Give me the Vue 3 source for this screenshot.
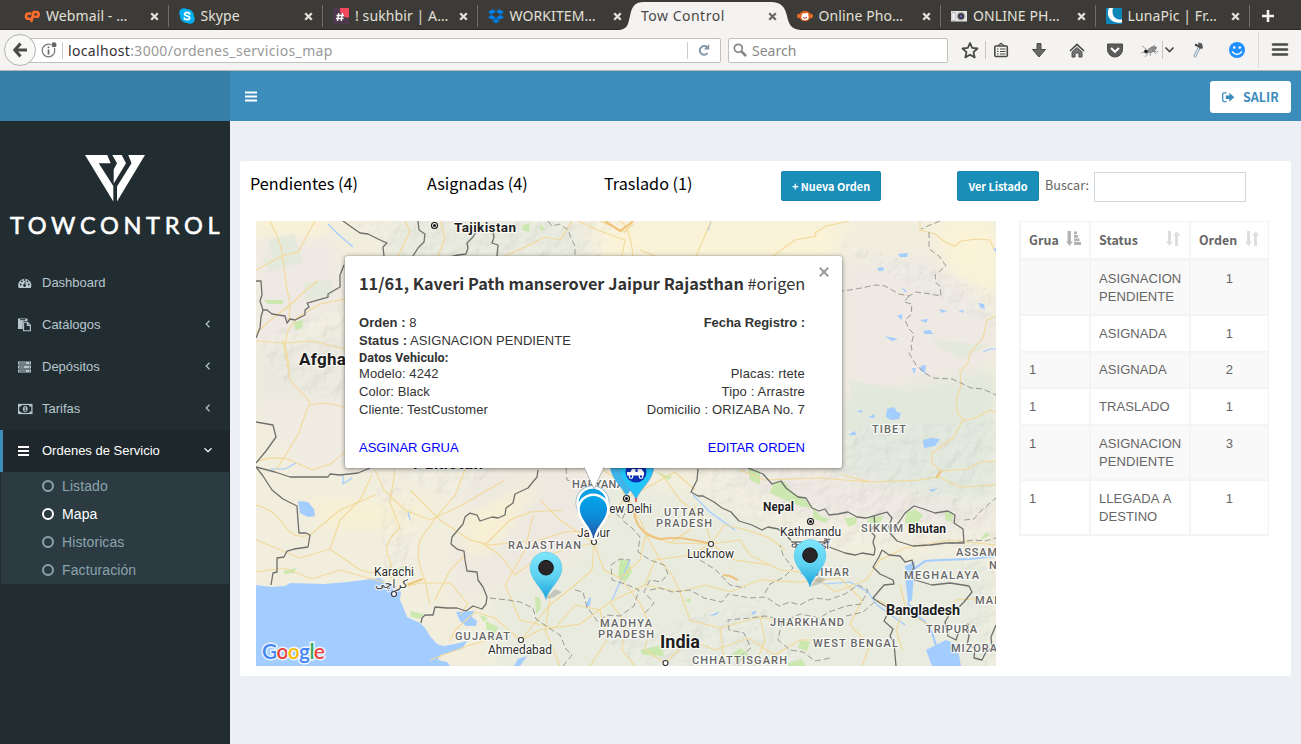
<script setup>
const tabs = [
  { id: 'cpanel', title: 'Webmail - …' },
  { id: 'skype', title: 'Skype' },
  { id: 'slack', title: '! sukhbir | A…' },
  { id: 'dropbox', title: 'WORKITEM…' },
  { id: 'tow', title: 'Tow Control', active: true },
  { id: 'monkey', title: 'Online Pho…' },
  { id: 'camera', title: 'ONLINE PH…' },
  { id: 'luna', title: 'LunaPic | Fr…' },
]
const menu = [
  { id: 'dash', label: 'Dashboard' },
  { id: 'paste', label: 'Catálogos', arrow: true },
  { id: 'server', label: 'Depósitos', arrow: true },
  { id: 'money', label: 'Tarifas', arrow: true },
  { id: 'bars', label: 'Ordenes de Servicio', active: true },
]
const submenu = ['Listado', 'Mapa', 'Historicas', 'Facturación']
const counters = ['Pendientes (4)', 'Asignadas (4)', 'Traslado (1)']
const rows = [
  { grua: '', status: 'ASIGNACION PENDIENTE', orden: 1, h: 53 },
  { grua: '', status: 'ASIGNADA', orden: 1, h: 35 },
  { grua: '1', status: 'ASIGNADA', orden: 2, h: 34, tight: true },
  { grua: '1', status: 'TRASLADO', orden: 1, h: 35 },
  { grua: '1', status: 'ASIGNACION PENDIENTE', orden: 3, h: 53 },
  { grua: '1', status: 'LLEGADA A DESTINO', orden: 1, h: 53 },
]

const borders = [
  '343,221 350,226 360,233 368,234 378,239 387,243 383,247 384,256',
  '418,221 419,230 425,234 424,242 418,248 413,256',
  '476,232 473,237 467,243 468,248 466,254 458,255 450,257',
  '493,232 494,237 492,243 498,245 497,256',
  '344,265 340,275 340,287 328,294 328,297 307,303 309,307 305,310 305,315 295,320 290,319 287,323 285,316 272,314 267,310 263,310 260,301 262,295 261,281 256,281',
  '263,310 261,317 260,328 256,338',
  '256,422 273,425 276,437 266,451 256,463',
  '256,467 275,472 290,477 328,477 330,474 340,475 358,473 370,468',
  '256,467 263,476 272,490 283,499 297,506 298,521 299,533 306,533 310,535 308,547 294,549 287,551 284,557 277,558 277,572 273,573 271,585',
  '538,470 537,477 532,483 528,488 515,494 513,503 506,508 505,515 498,518 492,517 480,521 477,515 470,513 465,517 463,524 452,537 451,544 457,549 464,551 465,560 467,571 477,572 478,580 483,587 487,597 486,604 482,609 473,606 466,611 457,608 447,608 435,607 433,615 425,615 422,618 421,623',
  '698,469 697,480 691,492 698,496 703,496 714,502 722,508 731,512 739,521 752,525 762,530 768,527 778,529 787,536 793,543 802,546 812,548 829,547 845,553 855,555 862,553 874,555 875,549 873,542 875,536 870,531 875,525 874,516',
  '748,468 763,474 772,484 781,481 786,488 798,497 806,498 812,508 819,511 825,509 829,515 838,514 848,512 857,517 866,518 880,514 887,512 892,518 889,526 890,533 897,541 913,546 930,545 946,543 964,543 963,529 954,523 955,515 948,511 935,513 924,509 914,506 905,513 899,522 893,528',
  '882,550 879,557 873,567 880,574 893,580 894,584 884,585 878,592 873,598 880,603 887,607 887,615 884,621 893,629 890,636 894,643 896,666',
  '882,550 889,555 900,556 905,562 912,560 914,568 910,573 915,580 932,585 950,583 969,586 972,592 964,602 959,607 952,610 945,622 948,636 956,640 960,628 968,624 969,636 967,645 975,648 974,658 982,660 986,652 992,648 991,637 996,625',
]
const dashed = [
  '548,221 552,226 560,224 568,230 571,238 575,246 575,256',
  '940,221 930,225 921,229', '929,232 929,249 939,256 946,266 935,275 936,283 940,286 941,296 930,294 916,292 909,296 899,294 892,290 885,286 876,285 861,288 850,290 842,291',
  '909,296 904,302 912,304 911,315 905,320 909,329 914,334 911,345 912,350 909,353 916,365 925,373 933,378 952,379 961,383 971,388 983,389 996,395',
  '964,520 974,519 981,511 990,503 996,498',
  '949,543 961,542 973,540 985,541 996,538',
  '625,470 629,485 626,498 628,506 622,520 632,528 640,537 638,552 650,560 664,565 668,574 661,582 650,580 644,592 654,603 645,613',
  '650,590 660,588 672,592 690,590 704,598 722,602 728,594 750,598 766,597 779,606 790,602 800,605 809,600 816,598 828,600 845,594 858,585 868,590 861,604 846,606 829,612 820,618 800,614 786,620 765,616 750,618 728,620 729,630 744,633 751,648 740,657 738,666',
  '765,593 770,584 784,577 793,568 783,555 780,545',
  '490,598 508,600 520,602 533,608 536,619 552,630 560,635 566,649 572,655 563,666',
  '575,590 583,592 587,607 598,622 607,615 620,616 634,606 639,590 628,585 612,580 611,565 620,559 630,560',
  '566,468 567,480 580,485 593,496 610,506 622,520',
  '846,616 863,612 877,600',
  '782,621 778,640 790,650 803,652 815,661 830,658',
  '700,560 716,570 730,585 745,588',
]
const roads = [
  'M256 333Q270 320 281 312T306 290L318 281', 'M270 221Q280 240 282 253T287 290Q292 305 288 323',
  'M256 270L282 256L298 252L315 221', 'M290 370L285 345L288 330L298 317L320 304L345 299',
  'M256 341L286 343L312 341L345 349', 'M256 462Q274 455 290 460L312 470L330 464Q342 455 348 448',
  'M283 340L290 380L310 402Q302 423 298 435L276 470', 'M310 405Q328 401 345 408',
  'M256 540L300 558L330 549L360 570L393 578', 'M256 572L284 568L312 579L340 570L393 585',
  'M395 470L390 503L400 528Q380 545 390 560L394 580', 'M465 470L455 495L438 515L420 540Q415 560 425 580L430 605',
  'M375 470L384 490L405 510L430 520L462 505L505 480', 'M410 490L440 520L470 540L490 545',
  'M256 505Q275 510 284 525T310 535L340 510L375 495', 'M393 590L420 583L450 583L468 604L460 615',
  'M480 542L500 555L515 575L535 560L563 550L594 543', 'M490 545L540 540L565 532L610 530',
  'M533 515L525 550L505 585L520 620L555 628L575 605', 'M594 543L592 570L575 585L550 605L521 640',
  'M594 543L605 520L626 498L618 480L603 470', 'M520 640L495 618L475 612L455 630L450 641',
  'M521 640L540 630L580 624L610 602L645 585L680 592', 'M626 498L640 520L646 533L670 543L711 544',
  'M626 498L650 486L675 472L695 490', 'M660 472L680 500L705 520L711 544',
  'M646 533L640 560L620 578L604 570L594 543', 'M645 585L655 560L690 555L711 544L735 560L770 565',
  'M711 544L740 540L750 555L780 570L810 573', 'M711 544L724 525L747 530L770 538L785 550',
  'M680 592L705 585L730 592L760 580L800 582L840 578', 'M680 592L690 620L720 628L760 617L800 626',
  'M620 578L640 603L650 625L645 650L665 663', 'M665 663L690 640L715 650L748 638L775 655L800 640L840 640',
  'M840 578L862 600L850 625L870 645L862 666', 'M810 573L835 592L866 580L880 560L905 548L950 540L996 545',
  'M576 220L600 231L625 240L622 256', 'M600 221L625 232L633 224', 'M640 250L655 256',
  'M711 221L696 256', 'M773 256L795 240L816 236L815 233L826 226L850 221',
  'M920 221L920 230L935 234L945 242L955 246L961 241L977 239L990 240L994 249',
  'M620 221Q630 226 633 256', 'M996 316L987 320L983 338L970 353L968 362L960 372L961 386L956 401L958 414L963 420L953 438L932 453L932 463L941 471L968 469L980 462L996 461',
  'M963 421L975 418L990 410L996 412', 'M842 475L870 482L900 481L920 480L939 477L960 487L996 485',
  'M740 470L765 480L820 478L870 482', 'M405 221L410 231L398 256',
  'M440 221L445 238L438 256', 'M505 256L525 247L545 237L560 240L572 221',
  'M540 575L550 599L545 630L560 666', 'M575 605L600 610L607 640L590 666',
  'M610 602L625 622L622 650L635 666', 'M720 628L725 666', 'M760 617L765 640L755 666',
  'M878 600L900 611L920 620L935 628', 'M900 585L905 605L896 630L902 650', 'M950 610L956 600L996 598',
  'M435 600L450 570L465 555', 'M330 549L340 520L360 500L372 475', 'M430 660L470 645L488 640',
  'M645 533L660 560L672 575L680 592', 'M670 543L690 530L695 505', 'M540 500L560 520L594 543', 'M485 545L510 520L530 512L562 510',
]
const majorRoads = [
  'M626 498Q634 506 635 517Q640 535 660 539Q675 537 687 539T708 543',
  'M605 221L620 231L630 224L633 221', 'M404 586L423 579', 'M723 575L730 576L738 580', 'M936 478L941 471',
]
const lakes = [
  '898,254 908,253 907,257 900,257', '878,268 884,267 883,271 878,271', '901,287 907,291 905,292',
  '978,303 984,304 985,309 981,308', '897,316 902,314 902,320', '920,320 928,319 926,323', '919,272 920,270',
  '923,331 930,330 933,334 925,334', '885,336 898,339 892,341', '939,309 947,311 942,313', '958,311 963,310 964,313',
  '921,366 926,365 925,372 929,376 920,370', '912,368 916,368 914,374', '887,409 894,407 897,412 901,413 899,419 891,420 886,417',
  '868,417 875,414 874,418', '923,440 932,438 940,439 935,446 924,448', '848,435 855,431 856,435', '993,249 996,248 996,252',
  '857,411 863,410 861,413', '930,424 931,432', '940,408 938,414', '915,395 919,398',
  '709,616 720,611 716,615', '751,612 757,611 754,615', '586,605 589,598 591,597 590,605 585,609', '929,490 938,488 932,492',
]
const greens = [
  '264,300 283,300 283,304 268,304', '294,322 303,320 302,328 295,330', '523,225 530,223 529,232 522,230',
  '541,223 545,231 540,230', '748,468 760,471 760,485 750,480', '773,483 784,481 793,494 803,497 812,508 800,506 785,500 770,493',
  '813,508 822,517 829,519 825,523 813,518', '845,518 857,517 856,524 848,527', '870,517 884,516 878,526 867,522',
  '906,513 915,509 923,515 916,525 905,523', '945,511 954,514 952,522 945,520', '622,470 632,466 650,473 640,478',
  '620,558 629,561 632,572 625,582 618,578', '283,571 296,568 294,573 284,574', '410,611 424,614 420,619 411,617',
  '479,615 488,618 484,622', '486,621 498,627 495,634 486,629', '640,650 662,645 664,656 643,655',
  '620,562 630,568 627,580 620,578', '684,600 691,598 690,603', '800,640 810,642 807,651 798,648', '535,596 540,598 541,608 536,614',
  '730,655 741,648 750,656 738,662', '398,568 404,566 403,572 398,574', '986,532 990,535 980,541', '655,472 672,477 668,480', '788,663 802,659 806,666 788,666',
]
const greys = [
  { t: 'TIBET', x: 872, y: 433, w: 34 }, { t: 'HARYANA', x: 572, y: 488, w: 52 },
  { t: 'UTTAR', x: 664, y: 516, w: 40 }, { t: 'PRADESH', x: 656, y: 527, w: 56 },
  { t: 'SIKKIM', x: 861, y: 532, w: 42 }, { t: 'BIHAR', x: 812, y: 576, w: 37 },
  { t: 'ASSAM', x: 956, y: 556, w: 41 }, { t: 'N', x: 989, y: 569, w: 8 },
  { t: 'MEGHALAYA', x: 904, y: 579, w: 75 }, { t: 'MAN', x: 975, y: 604, w: 27 },
  { t: 'TRIPURA', x: 926, y: 633, w: 51 }, { t: 'MIZORA', x: 951, y: 652, w: 46 },
  { t: 'JHARKHAND', x: 770, y: 626, w: 74 }, { t: 'WEST BENGAL', x: 813, y: 647, w: 85 },
  { t: 'CHHATTISGARH', x: 692, y: 664, w: 95 }, { t: 'MADHYA', x: 600, y: 627, w: 52 },
  { t: 'PRADESH', x: 598, y: 638, w: 56 }, { t: 'GUJARAT', x: 455, y: 640, w: 55 },
  { t: 'RAJASTHAN', x: 508, y: 549, w: 73 },
]
const cities = [
  { t: 'New Delhi', x: 601, y: 513, w: 51 }, { t: 'Kathmandu', x: 780, y: 536, w: 61 },
  { t: 'Lucknow', x: 687, y: 558, w: 47 }, { t: 'Karachi', x: 374, y: 576, w: 40 },
  { t: 'Ahmedabad', x: 488, y: 654, w: 64 }, { t: 'Jaipur', x: 577, y: 537, w: 33 },
]
const countries = [
  { t: 'Tajikistan', x: 454, y: 232, w: 62, s: 13.5 }, { t: 'Afghanistan', x: 299, y: 365, w: 96, s: 17 },
  { t: 'Pakistan', x: 413, y: 469, w: 70, s: 17 }, { t: 'Nepal', x: 763, y: 511, w: 31, s: 12 },
  { t: 'Bhutan', x: 908, y: 533, w: 38, s: 12 }, { t: 'Bangladesh', x: 886, y: 615, w: 74, s: 14.5 },
  { t: 'India', x: 660, y: 648, w: 40, s: 18 },
]
const towns = [[711, 544], [394, 594], [521, 640], [594, 542], [665.5, 663]]
const capitals = [[434.5, 225.5], [626.5, 498.5], [810.5, 521.5]]
const dotPins = [[546, 567], [810, 554.5]]
</script>

<template>
  <div class="window">
    <div class="tabbar">
      <div v-for="tab in tabs" :key="tab.id" class="tab" :class="{ active: tab.active, before: tab.id === 'dropbox' }">
        <svg v-if="tab.active" class="tabshape" width="182" height="30" viewBox="0 0 182 30">
          <path d="M0 30C9 29 9 24 11 16C13 6 16 2 25 2H152C162 2 166 7 168 16C170 25 172 29 182 30Z" fill="#f4f3f2" />
        </svg>
        <svg v-else class="favicon" width="16" height="16" viewBox="0 0 16 16">
          <g v-if="tab.id === 'cpanel'" fill="none" stroke="#ff6c2c" stroke-width="2.6" stroke-linecap="round" stroke-linejoin="round">
            <path d="M6.5 5.6H4.6a2.6 2.6 0 0 0 0 5.2H6M7.500 13L9.700 4h2.600a2.300 2.300 0 0 1 0 4.800H11" />
          </g>
          <g v-else-if="tab.id === 'skype'">
            <circle cx="5" cy="5" r="4.800" fill="#00aff0" /><circle cx="11" cy="11" r="4.800" fill="#00aff0" /><circle cx="8" cy="8" r="7" fill="#00aff0" />
            <path d="M10.800 5.800C10 4 5.300 4 5.500 6.200C5.700 8.300 10.700 7.300 10.700 9.800C10.700 12.200 5.700 12 5.200 10" fill="none" stroke="#fff" stroke-width="1.800" stroke-linecap="round" />
          </g>
          <g v-else-if="tab.id === 'slack'">
            <rect width="16" height="16" fill="#4d394b" /><path d="M7 0h9v9.500a8 8 0 0 1-9-9.500z" fill="#f2495c" />
            <path d="M5.800 5L4.500 13M9.500 5L8.200 13M3.500 7.500h7.500M3 10.500h7.500" stroke="#fff" stroke-width="1.400" />
          </g>
          <g v-else-if="tab.id === 'dropbox'" fill="#007ee5">
            <path d="M4.700 1L8 3.700L3.300 6.500L0 4zM11.300 1L16 4L12.700 6.500L8 3.700zM0 9.200L3.300 6.700L8 9.500L4.700 12zM16 9.200L12.700 6.700L8 9.500L11.300 12zM8 10.500L11.400 13L8 15.500L4.600 13z" />
          </g>
          <g v-else-if="tab.id === 'monkey'">
            <circle cx="2.300" cy="8" r="2.300" fill="#e8722c" /><circle cx="13.700" cy="8" r="2.300" fill="#e8722c" /><ellipse cx="8" cy="8" rx="5.800" ry="5.200" fill="#e0601c" />
            <ellipse cx="8" cy="9" rx="3.700" ry="3.300" fill="#fff" /><circle cx="6.600" cy="6.700" r="1.600" fill="#fff" /><circle cx="9.700" cy="6.300" r="1.600" fill="#fff" /><path d="M6 9.500q2 2 4-.5" stroke="#a33" fill="none" />
          </g>
          <g v-else-if="tab.id === 'camera'">
            <rect y="3" width="16" height="10.500" fill="#e6e6e6" /><rect x="1" y="4.500" width="3" height="8" fill="#f8f8f8" stroke="#999" stroke-width=".6" /><circle cx="10" cy="8.300" r="4.300" fill="#aaa" /><circle cx="10" cy="8.300" r="3" fill="#333" /><circle cx="10" cy="8.300" r="1.300" fill="#66c" />
          </g>
          <g v-else>
            <rect width="16" height="16" fill="#0f86b8" /><path d="M3 0C-1 9 6 16 16 14.500V11.500C9 12.500 5 7 7 0z" fill="#fff" />
          </g>
        </svg>
        <span class="tabtitle">{{ tab.title }}</span>
        <svg class="tabclose" width="9" height="9" viewBox="0 0 9 9"><path d="M1.200 1.200L7.800 7.800M7.800 1.200L1.200 7.800" stroke="currentColor" stroke-width="2.300" /></svg>
      </div>
      <svg class="plus" width="14" height="14" viewBox="0 0 14 14"><path d="M7 1V13M1 7H13" stroke="#f2f1f0" stroke-width="2.600" /></svg>
    </div>

    <div class="navbar">
      <div class="back"><svg width="14" height="16" viewBox="0 0 14 16"><path d="M7.500 1.500L1.800 8L7.500 14.500M2 8H14" fill="none" stroke="#4a4a48" stroke-width="3.200" /></svg></div>
      <div class="urlbox">
        <svg class="info" width="18" height="18" viewBox="0 0 18 18"><circle cx="7.500" cy="9.500" r="6.300" fill="none" stroke="#777" stroke-width="1.200" /><path d="M7.500 8.500V13.500M7.500 5.500V7.200" stroke="#666" stroke-width="1.700" /><circle cx="13" cy="3.800" r="3.300" fill="#fff" /><circle cx="13" cy="3.800" r="2.500" fill="#666" /></svg>
        <span class="url"><b>localhost</b>:3000/ordenes_servicios_map</span>
        <span class="reload"><svg width="14" height="14" viewBox="0 0 14 14"><path d="M10.500 10A4.300 4.300 0 1 1 10 4.200" fill="none" stroke="#8497a8" stroke-width="2" /><path d="M12.200 1V6.500H6.800z" fill="#8497a8" /></svg></span>
      </div>
      <div class="searchbox">
        <svg width="14" height="14" viewBox="0 0 14 14"><circle cx="5.300" cy="5.300" r="4" fill="none" stroke="#888" stroke-width="1.700" /><path d="M8 8L13 13" stroke="#888" stroke-width="2.600" /></svg>
        <span>Search</span>
      </div>
      <svg class="tools" width="353" height="40" viewBox="948 30 353 40">
        <path d="M970 43l2.200 4.900 5.300.6-4 3.600 1.200 5.300-4.700-2.700-4.700 2.700 1.200-5.300-4-3.600 5.300-.6z" fill="none" stroke="#4a4a48" stroke-width="1.800" stroke-linejoin="round" />
        <path d="M985.500 41V59M1162.500 41V59" stroke="#c9c7c4" />
        <path d="M1258.500 32V68" stroke="#dddbd8" />
        <g fill="none" stroke="#4a4a48" stroke-width="1.600"><rect x="994.800" y="46" width="12.500" height="10.500" rx="1" /><path d="M998 46q.5-1.500 1.800-1.500q1.200-2.300 2.500 0q1.300 0 1.700 1.500M997 49h1.500M1000 49h5.500M997 51.500h1.500M1000 51.500h5.500M997 54h1.500M1000 54h5.500" stroke-width="1.200" /></g>
        <path d="M1037 43.500h4v6h4.500l-6.500 7.500-6.500-7.500h4.500z" fill="#686866" stroke="#4a4a48" />
        <path d="M1070 51l7-6.500 7 6.500" fill="none" stroke="#4a4a48" stroke-width="1.700" /><path d="M1077 47.500l5 4.500v5h-3v-4h-4v4h-3v-5z" fill="#777" stroke="#4a4a48" />
        <path d="M1107.500 44h15v5.500a7.500 7.500 0 0 1-15 0z" fill="#5b5b59" stroke="#4a4a48" /><path d="M1111 48l4 3.800 4-3.800" fill="none" stroke="#fff" stroke-width="2" />
        <g stroke="#666" fill="#999" stroke-width=".6"><ellipse cx="1152" cy="49.500" rx="4.500" ry="2.300" transform="rotate(-25 1152 49.500)" /><circle cx="1146" cy="51.500" r="1.800" fill="#111" /><path d="M1150 49l5-4M1152 49l5-2M1149 52l-4 5M1151 52l-1 4M1153 51l3 3M1146 49l-4-3M1144 52l-3 1M1152 51l6 1" /></g>
        <path d="M1165.500 47.500l4 4 4-4" fill="none" stroke="#4a4a48" stroke-width="1.700" />
        <path d="M1194.500 57l5-10" stroke="#8da0b3" stroke-width="3" /><path d="M1194.800 56.500l4.700-9.500" stroke="#eef3f7" stroke-width="1.100" /><path d="M1195 44.500l7.500 3.500" stroke="#444" stroke-width="2" /><path d="M1198 42.500l4 1 .8 3.500-3.300 2z" fill="#555" />
        <circle cx="1237" cy="50" r="8" fill="#1e90ff" /><circle cx="1234.200" cy="47.500" r="1.300" fill="#fff" /><circle cx="1239.800" cy="47.500" r="1.300" fill="#fff" /><path d="M1232 51.500q5 6 10 0" fill="none" stroke="#fff" stroke-width="1.300" />
        <path d="M1273 44.500h14M1273 49.500h14M1273 54.500h14" stroke="#4a4a48" stroke-width="2.600" stroke-linecap="round" />
      </svg>
    </div>

    <header class="topbar">
      <div class="brand"></div>
      <svg class="burger" width="12" height="11" viewBox="0 0 12 11"><path d="M0 1.500H12M0 5.500H12M0 9.500H12" stroke="#fff" stroke-width="2" /></svg>
      <div class="salir">
        <svg width="13" height="11" viewBox="0 0 13 11"><path d="M4.500 .8H2.300Q.7 .8 .7 2.400V8.100Q.7 9.700 2.300 9.700H4.500" fill="none" stroke="#3c8dbc" stroke-width="1.300" /><path d="M3.800 3.500H7.300V.8L12.300 5.300L7.300 9.700V7H3.800z" fill="#3c8dbc" /></svg>
        <span>SALIR</span>
      </div>
    </header>

    <div class="body">
      <aside class="sidebar">
        <svg class="logo" width="230" height="141" viewBox="0 121 230 141">
          <g fill="#fff">
            <path d="M85 155H107.300L110.700 163.300H98.700L113.300 186V201.500z" />
            <path d="M112.300 155H121.700L126 163.300L113.700 183.500V169.500L117 163.300z" />
            <path d="M128.300 155H145L117 201.500V186.500L131.500 163.300z" />
            <text x="10" y="233.700" class="wordmark" textLength="209.500">TOWCONTROL</text>
          </g>
        </svg>
        <div v-for="m in menu" :key="m.id" class="item" :class="{ active: m.active }">
          <svg class="mi" width="15" height="14" viewBox="0 0 15 14">
            <g v-if="m.id === 'dash'"><path d="M.5 11.500A6.600 6.600 0 1 1 13 11.500Q12.800 12 12.300 12H1.200Q.7 12 .5 11.500z" fill="currentColor" /><g fill="#222d32"><circle cx="2.700" cy="8.500" r=".9" /><circle cx="3.900" cy="5.300" r=".9" /><circle cx="6.700" cy="3.900" r=".9" /><circle cx="9.600" cy="5.300" r=".9" /><circle cx="10.800" cy="8.500" r=".9" /><path d="M7.800 5.800L7.300 8.300A1.400 1.400 0 1 1 6.300 8.100L7 5.600z" /></g></g>
            <g v-else-if="m.id === 'paste'"><path d="M0 .5H9.500V3H6Q4.800 3 4.800 4.200V11H0z" fill="currentColor" /><path d="M2.200 1.700H7.300" stroke="#222d32" /><path d="M5.600 4.300H9.500L12.400 7.200V12.700H5.600zM9.300 4.300V7.400H12.400" fill="none" stroke="currentColor" stroke-width="1.100" /></g>
            <g v-else-if="m.id === 'server'"><path d="M0 2H13V5H0zM0 6H13V9H0zM0 10H13V13H0z" fill="currentColor" transform="translate(0 -.5)" /><path d="M1 3H8M1 7H6M1 11H8M11 3H12M11 7H12M11 11H12" stroke="#222d32" stroke-width=".9" /></g>
            <g v-else-if="m.id === 'money'"><rect x=".6" y="2.500" width="13.300" height="9" fill="none" stroke="currentColor" stroke-width="1.200" /><path d="M1 2.500H4Q3.500 4.500 1 5zM13.500 2.500H10.500Q11 4.500 13.500 5zM1 11.500H4Q3.500 9.500 1 9zM13.500 11.500H10.500Q11 9.500 13.500 9z" fill="currentColor" /><ellipse cx="7.250" cy="7" rx="2.300" ry="3" fill="currentColor" /><path d="M6.300 6L7.400 5.300V8.500M6.200 8.600H8.500" fill="none" stroke="#222d32" stroke-width=".8" /></g>
            <path v-else d="M0 4H11M0 8H11M0 12H11" stroke="currentColor" stroke-width="2" transform="translate(0 -1)" />
          </svg>
          <span>{{ m.label }}</span>
          <svg v-if="m.arrow" class="arrow" width="8" height="8" viewBox="0 0 8 8"><path d="M5.500 .8L2.200 4L5.500 7.200" fill="none" stroke="currentColor" stroke-width="1.200" /></svg>
          <svg v-if="m.active" class="arrow" width="8" height="8" viewBox="0 0 8 8"><path d="M.5 2.300L4 5.600L7.500 2.300" fill="none" stroke="currentColor" stroke-width="1.200" /></svg>
        </div>
        <div class="submenu">
          <div v-for="s in submenu" :key="s" class="sub" :class="{ on: s === 'Mapa' }"><i></i><span>{{ s }}</span></div>
        </div>
      </aside>

      <main class="content">
        <section class="panel">
          <div class="toprow">
            <div v-for="c in counters" :key="c" class="counter">{{ c }}</div>
            <div class="cell"><span class="btn nueva">+ Nueva Orden</span></div>
            <div class="last"><span class="btn ver">Ver Listado</span><label>Buscar:</label><input type="text" /></div>
          </div>
          <div class="columns">
            <div class="map">
              <svg class="mapsvg" width="740" height="445" viewBox="256 221 740 445">
                <defs>
                  <filter id="relief" x="0" y="0" width="1" height="1">
                    <feTurbulence type="fractalNoise" baseFrequency=".07" numOctaves="4" seed="8" result="n" />
                    <feDiffuseLighting in="n" surfaceScale="4" lighting-color="#fff" result="l"><feDistantLight azimuth="225" elevation="55" /></feDiffuseLighting>
                    <feComposite in="l" in2="SourceGraphic" operator="in" />
                  </filter>
                  <filter id="soft" x="-20%" y="-20%" width="140%" height="140%"><feGaussianBlur stdDeviation="7" /></filter>
                  <linearGradient id="cy" x1="0" y1="0" x2="0" y2="1"><stop offset="0" stop-color="#7fe6fc" /><stop offset=".55" stop-color="#5bd0f0" /><stop offset="1" stop-color="#189fdc" /></linearGradient>
                  <linearGradient id="bl" x1="0" y1="0" x2="0" y2="1"><stop offset="0" stop-color="#00a6ec" /><stop offset=".5" stop-color="#0c8cd6" /><stop offset="1" stop-color="#2a4f9e" /></linearGradient>
                </defs>
                <rect x="256" y="221" width="740" height="445" fill="#f1eede" />
                <g filter="url(#soft)">
                  <path d="M256 240L330 230L345 300L256 350z" fill="#eee9e3" />
                  <path d="M256 215H340L320 238L256 236z" fill="#f9f2d6" />
                  <path d="M400 221H560L600 256H380z" fill="#e8eadd" />
                  <path d="M590 221H850L830 260H600zM930 221H996V300L950 270z" fill="#faf3d8" />
                  <path d="M840 265L930 255L996 320V360L900 400L840 420z" fill="#eee9e2" />
                  <path d="M840 400L920 385L996 370V500L840 495z" fill="#e2e8dc" />
                  <path d="M256 350L345 330V400L256 420z" fill="#ebe9de" />
                  <path d="M256 400L345 400L380 468L300 470z" fill="#f0ebe3" />
                  <path d="M470 470H600L620 520L570 560L500 590L455 600L450 550z" fill="#eee9e0" />
                  <path d="M600 480L700 500L850 560L990 560V680H500L490 600L580 560z" fill="#e8ebde" />
                  <path d="M300 500L430 500L410 530L330 530zM540 480L460 520L470 560L500 540z" fill="#f8f0d4" />
                  <path d="M720 470L850 475L930 495L990 510V530L800 515z" fill="#ede8e0" />
                </g>
                <path d="M268 240L294 234L303 262L276 270zM262 258L280 260L272 274zM303 282L330 280L335 296L305 300zM850 380L900 390L890 410L852 400zM930 340L990 345L960 360z" fill="#dfe8d9" opacity=".7" />
                <g filter="url(#relief)" opacity=".13">
                  <path d="M350 221H620L600 256H400L384 245zM256 340L345 300V410L280 380zM690 468H996V550L900 545L830 548L780 530L695 492zM842 240L996 290V330L842 250zM842 430L996 420V480H842zM375 470L415 500V580L385 575zM600 640L760 600L800 666H640zM960 550L996 560V666H975zM455 500L500 470H375z" fill="#000" />
                </g>
                <g fill="#c5e8a7"><polygon v-for="(g, i) in greens" :key="i" :points="g" opacity=".85" /></g>
                <g fill="#a3ccff">
                  <path d="M256 585L272 587L285 586L290 583L325 584L347 582L380 578L388 584L393 585L401 592L400 600L403 607L407 617L420 623L425 628L430 636L437 644L444 646L455 644L467 641L462 649L448 653L440 655L438 660L447 662L450 666H256z" />
                  <path d="M456 612L474 611L472 617L477 621L476 626L466 626L460 621zM518 659L527 656L520 666H514zM298 501L308 502L314 509L315 516L308 517L300 513zM926 650L946 640L957 645L961 666H932zM905 566L915 562L914 573L912 600L908 603L906 585z" />
                  <polygon v-for="(l, i) in lakes" :key="i" :points="l" />
                </g>
                <g fill="none" stroke="#a3ccff" stroke-width="2.200"><path d="M908 603L915 614L925 622L932 633L937 648M996 556L970 559L942 560L925 561L914 569" /><path d="M270 469L285 469L296 463M343 474V484L352 478M410 520L408 512M630 560L612 600M693 495L710 512L735 530M800 573L825 584L850 582L868 592L877 605L905 625M328 224L338 234L353 247M711 221L708 231M983 352L990 349H996" stroke-width="1.200" /></g>
                <g fill="none" stroke="#f3d998" stroke-width="1.100"><path v-for="(r, i) in roads" :key="i" :d="r" /></g>
                <g fill="none" stroke="#f0bd70" stroke-width="2.200" opacity=".85"><path v-for="(r, i) in majorRoads" :key="i" :d="r" /></g>
                <g fill="none" stroke="#9b9b95" stroke-width="1" stroke-dasharray="6 3"><polyline v-for="(b, i) in dashed" :key="i" :points="b" /></g>
                <g fill="none" stroke="#6f6f6c" stroke-width="1.300" stroke-linejoin="round"><polyline v-for="(b, i) in borders" :key="i" :points="b" /></g>

                <g class="grey"><text v-for="(l, i) in greys" :key="i" :x="l.x" :y="l.y" :textLength="l.w">{{ l.t }}</text></g>
                <g class="city"><text v-for="l in cities" :key="l.t" :x="l.x" :y="l.y" :textLength="l.w">{{ l.t }}</text>
                  <text x="408" y="588" class="urdu" direction="rtl">كراچی</text><text x="791" y="549" class="urdu">काठमाडौँ</text></g>
                <g class="country"><text v-for="l in countries" :key="l.t" :x="l.x" :y="l.y" :textLength="l.w" :font-size="l.s">{{ l.t }}</text></g>
                <g fill="#fff" stroke="#333" stroke-width="1.100"><circle v-for="(t, i) in towns" :key="i" :cx="t[0]" :cy="t[1]" r="2.500" /></g>
                <g v-for="(t, i) in capitals" :key="'c' + i"><circle :cx="t[0]" :cy="t[1]" r="3" fill="#fff" stroke="#111" stroke-width="1.100" /><circle :cx="t[0]" :cy="t[1]" r="1.500" fill="#111" /></g>

                <g v-for="(p, i) in dotPins" :key="'p' + i" :transform="`translate(${p[0]} ${p[1]})`">
                  <path d="M0 32L9 22L16 25L8 30z" fill="#555" opacity=".25" />
                  <path d="M0 32.500C-3 21-16 13-16 1A16 16 0 0 1 16 1C16 13 3 21 0 32.500z" fill="url(#cy)" stroke="#62c5e6" stroke-width=".5" />
                  <circle cy=".7" r="7.300" fill="#2a2627" stroke="#111" />
                </g>
                <path d="M626 496C622 486 611 480 610 466H640L636 484z" fill="#3fb4ea" />
                <path d="M636 500C632 488 620 484 618 466H654C653 482 640 488 636 500z" fill="#22c5f8" stroke="#8c86b8" stroke-width=".5" />
                <path d="M636 498V502" stroke="#e04a3a" stroke-width="1.500" />
                <circle cx="636" cy="472" r="10.500" fill="#0b2fb4" />
                <path d="M627 475.500v-3.500h3.500l1.500-3h3.500v3h2v-3h4l2.500 3.500v3z" fill="#fff" /><g fill="#0b2fb4" stroke="#fff" stroke-width="1.200"><circle cx="631" cy="476.500" r="1.800" /><circle cx="641" cy="476.500" r="1.800" /></g>
                <g stroke="#fff" stroke-width="2.500">
                  <path d="M592 533C588 520 577.500 515 577.500 502.500A14.800 14.800 0 0 1 607.500 502.500C607.500 515 596 520 592 533z" fill="#0aa0e2" stroke="#8fb6cc" stroke-width="4" /><path d="M592 533C588 520 577.500 515 577.500 502.500A14.800 14.800 0 0 1 607.500 502.500C607.500 515 596 520 592 533z" fill="#0aa0e2" />
                  <path d="M591.800 538C590 526 578.500 521 578.500 509.500A14.900 14.900 0 0 1 608.300 509.500C608.300 521 597 526 595.200 538Q593.500 541 591.800 538z" fill="url(#bl)" />
                </g>
                <g class="google"><text x="262" y="659" textLength="63"><tspan fill="#4285f4">G</tspan><tspan fill="#ea4335">o</tspan><tspan fill="#fbbc05">o</tspan><tspan fill="#4285f4">g</tspan><tspan fill="#34a853">l</tspan><tspan fill="#ea4335">e</tspan></text></g>
              </svg>
              <div class="popup">
                <svg class="tail" width="26" height="24" viewBox="0 0 26 24"><path d="M3 0L13 22L23 0z" fill="#fff" /><path d="M3 0L13 22L23 0" fill="none" stroke="#999" stroke-width=".7" /></svg>
                <svg class="close" width="10" height="10" viewBox="0 0 10 10"><path d="M.8 .8L9.200 9.200M9.200 .8L.8 9.200" stroke="#999" stroke-width="2" /></svg>
                <div class="title"><b>11/61, Kaveri Path manserover Jaipur Rajasthan</b> #origen</div>
                <div class="line first"><span><b>Orden :</b> 8</span><b class="fecha">Fecha Registro :</b></div>
                <div class="line"><span><b>Status :</b> ASIGNACION PENDIENTE</span></div>
                <div class="line datos"><b>Datos Vehiculo:</b></div>
                <div class="line"><span>Modelo: 4242</span><span class="right">Placas: rtete</span></div>
                <div class="line"><span>Color: Black</span><span class="right">Tipo : Arrastre</span></div>
                <div class="line"><span>Cliente: TestCustomer</span><span class="right">Domicilio : ORIZABA No. 7</span></div>
                <div class="line links"><a>ASGINAR GRUA</a><a>EDITAR ORDEN</a></div>
              </div>
            </div>
            <div class="grid">
              <div class="row head">
                <div class="c1">Grua<svg width="15" height="15" viewBox="0 0 15 15"><path d="M1.500 0H5V10.500H7L3.500 15L0 10.500H1.500zM8 .5h3v2.800H8zM8 4h4v2.800H8zM8 7.500h5.500v2.800H8zM8 11h7v3H8z" fill="#b4b4b4" /></svg></div>
                <div class="c2">Status<svg width="15" height="15" viewBox="0 0 15 15"><path d="M2 0H5V10.500H7L3.500 15L0 10.500H2zM9 15H12V4.500H14.500L10.600 .500L7 4.500H9z" fill="#dedede" /></svg></div>
                <div class="c3">Orden<svg width="15" height="15" viewBox="0 0 15 15"><path d="M2 0H5V10.500H7L3.500 15L0 10.500H2zM9 15H12V4.500H14.500L10.600 .500L7 4.500H9z" fill="#dedede" /></svg></div>
              </div>
              <div v-for="(r, i) in rows" :key="i" class="row" :class="{ odd: i % 2 === 0, tight: r.tight }" :style="{ height: r.h + 'px' }">
                <div class="c1">{{ r.grua }}</div><div class="c2">{{ r.status }}</div><div class="c3">{{ r.orden }}</div>
              </div>
            </div>
          </div>
        </section>
      </main>
    </div>
  </div>
</template>

<style>
html, body { margin: 0; background: #ecf0f5; overflow: hidden; }
</style>

<style scoped>
* { box-sizing: border-box; }
svg { display: block; flex: none; }
.window { width: 1301px; height: 744px; display: flex; flex-direction: column; overflow: hidden; font-family: "Liberation Sans", Arial, sans-serif; font-size: 13px; color: #333; }
.tabbar { height: 30px; background: #3c3b37; display: flex; align-items: center; padding-left: 14px; border-bottom: 1px solid #2b2a27; font-family: "Noto Sans", sans-serif; font-size: 14px; color: #e3e0d8; }
.tab { width: 154.5px; height: 30px; display: flex; align-items: center; padding: 3px 10px 0 10px; position: relative; flex: none; }
.tab::after { content: ""; position: absolute; right: 0; top: 5px; height: 22px; width: 1px; background: #6f6e6a; }
.tab.active::after, .tab.before::after { display: none; }
.tabshape { position: absolute; left: -13px; top: 0; }
.favicon { margin-right: 6px; }
.tabtitle { position: relative; white-space: nowrap; flex: 1; line-height: 20px; letter-spacing: .1px; }
.tabclose { position: relative; color: #e3e0d8; }
.active { color: #4a4946; }
.tab.active .tabtitle { left: -1px; letter-spacing: .5px; }
.active .tabclose { color: #6a6966; }
.tab.active { z-index: 2; }
.plus { margin: 3px 0 0 11px; }
.navbar { height: 41px; background: #f4f3f2; border-bottom: 1px solid #b9b5b0; display: flex; align-items: center; position: relative; flex: none; padding-left: 4px; font-family: "Noto Sans", sans-serif; font-size: 14px; }
.back { width: 32px; height: 32px; border: 1px solid #b4b2af; border-radius: 50%; background: #f8f8f7; display: flex; align-items: center; justify-content: center; z-index: 1; }
.urlbox { height: 25px; width: 695px; margin-left: -10px; border: 1px solid #c3c0bc; border-radius: 2px; background: #fff; display: flex; align-items: center; padding-left: 14px; }
.info { margin-bottom: 1px; }
.url { border-left: 1px solid #ccc; margin-left: 3px; padding-left: 5px; line-height: 17px; color: #999; flex: 1; letter-spacing: .34px; }
.url b { font-weight: 400; color: #333; }
.reload { border-left: 1px solid #ccc; width: 33px; height: 17px; padding: 1px 0 0 9px; }
.searchbox { margin-left: 7px; width: 220px; height: 25px; border: 1px solid #c3c0bc; border-radius: 2px; background: #fff; display: flex; align-items: center; padding-left: 4px; gap: 5px; color: #888; }
.topbar { height: 50px; background: #3c8dbc; display: flex; align-items: center; flex: none; }
.brand { width: 230px; height: 50px; background: #367fa9; }
.burger { margin: 1px 0 0 15px; }
.salir { margin: 2px 10px 0 auto; width: 81px; height: 32px; border-radius: 3px; background: #fff; color: #3c8dbc; display: flex; align-items: center; padding-left: 12px; gap: 8px; font: 700 12.500px/32px "Noto Sans CJK JP", sans-serif; }
.body { flex: 1; display: flex; min-height: 0; }
.sidebar { width: 230px; background: #222d32; }
.wordmark { font-family: Lato, sans-serif; font-size: 23.500px; font-weight: 400; stroke: #fff; stroke-width: .6px; }
.item { height: 42px; display: flex; align-items: center; color: #b8c7ce; border-left: 3px solid transparent; padding: 0 18px 2px 15px; }
.item.active { background: #1e282c; color: #fff; border-left-color: #3c8dbc; }
.mi { margin-right: 9px; position: relative; top: 1px; }
.arrow { margin-left: auto; }
.submenu { margin: 0 1px; background: #2c3b41; height: 112px; }
.sub { height: 28px; display: flex; align-items: center; padding-left: 41px; color: #8aa4af; font-size: 14px; letter-spacing: .1px; }
.sub i { width: 12px; height: 12px; border: 2px solid currentColor; border-radius: 50%; margin-right: 8px; }
.sub.on { color: #fff; }
.content { flex: 1; background: #ecf0f5; padding: 40px 10px 0; }
.panel { height: 515px; background: #fff; border-radius: 3px; display: flex; flex-direction: column; }
.toprow { height: 60px; padding: 10px 0 0 10px; display: flex; flex: none; font-family: "Noto Sans CJK JP", sans-serif; }
.counter { width: 177px; font-size: 16.200px; line-height: 24px; color: #000; white-space: nowrap; }
.cell { width: 176px; }
.btn { display: block; height: 30px; line-height: 31px; border-radius: 3px; background: #188eb8; color: #fff; text-align: center; font-weight: 700; font-size: 10.850px; box-shadow: inset 0 0 0 1px #1b82ae; }
.nueva { width: 100px; }
.ver { width: 82px; }
.last { display: flex; }
.last label { margin-left: 6px; width: 49px; font-size: 12.600px; line-height: 28px; color: #666; white-space: nowrap; }
.last input { width: 152px; height: 30px; margin-top: 1px; border: 1px solid #d2d6de; background: #fff; padding: 0; }
.columns { display: flex; padding-left: 16px; }
.map { width: 740px; height: 445px; position: relative; }
.mapsvg { position: absolute; left: 0; top: 0; }
.grey text, .city text, .country text { font-family: Roboto, sans-serif; paint-order: stroke; stroke: #fff; stroke-opacity: .75; stroke-width: 2.500px; stroke-linejoin: round; }
.grey text { font-size: 11px; font-weight: 500; fill: #666; }
.city text { font-size: 12px; fill: #2b2b2b; }
.city .urdu { font-family: "DejaVu Sans", sans-serif; font-size: 12px; fill: #444; }
.country text { font-weight: 700; fill: #1d1d1d; }
.google text { font-family: Lato, sans-serif; font-size: 21px; font-weight: 600; paint-order: stroke; stroke: #fff; stroke-width: 3px; stroke-opacity: .8; }
.popup { position: absolute; left: 89px; top: 35px; width: 497px; height: 212px; background: #fff; border-radius: 2px; box-shadow: 0 1px 5px rgba(0, 0, 0, .45), 0 0 1px rgba(0, 0, 0, .5); padding: 16px 37px 0 14px; }
.tail { position: absolute; left: 236px; top: 211px; }
.close { position: absolute; right: 13px; top: 11px; }
.title { font: 400 16.290px/22px "Noto Sans CJK JP", sans-serif; white-space: nowrap; }
.line { display: flex; justify-content: space-between; height: 18px; line-height: 18px; white-space: nowrap; letter-spacing: .06px; }
.line .right { letter-spacing: .15px; }
.line .fecha { letter-spacing: -.03px; }
.first { margin-top: 20px; }
.line.datos { font-family: Roboto, sans-serif; height: 15px; line-height: 15px; font-size: 12.600px; }
.links { margin-top: 20px; color: #00f; letter-spacing: 0; }
.grid { width: 250px; margin-left: 23px; background: #f4f4f4; padding: 1px 1px 2px 2px; display: flex; flex-direction: column; gap: 2px; color: #666; height: 315px; }
.row { display: flex; gap: 2px; flex: none; line-height: 18px; letter-spacing: .07px; }
.row > div { background: #fff; padding: 9px 8px 0; }
.row.odd > div { background: #f9f9f9; }
.row.tight > div { padding-top: 8px; }
.row .c1 { width: 68px; }
.row .c2 { width: 98px; word-spacing: 1px; }
.row .c3 { width: 77px; text-align: center; }
.row.head { height: 36px; margin-bottom: 1px; font: 700 12.400px/18px "Noto Sans CJK JP", sans-serif; }
.row.head > div { display: flex; justify-content: space-between; text-align: left; padding-top: 9px; }
.tools { position: absolute; left: 948px; top: 0; }
</style>
